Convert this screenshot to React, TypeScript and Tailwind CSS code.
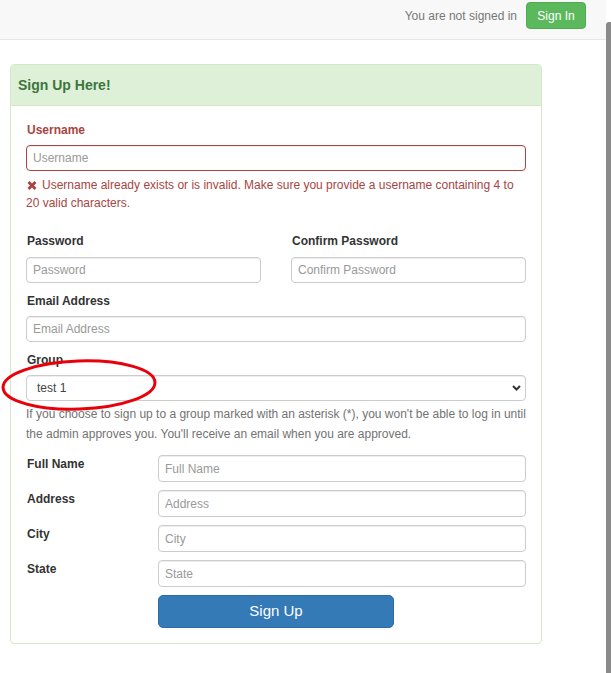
import React from "react";

const inputBase =
  "block w-full border rounded-[4px] px-[6px] text-[12px] text-[#555] bg-white outline-none placeholder:text-[#999] shadow-[inset_0_1px_1px_rgba(0,0,0,0.075)]";
const inputCls = inputBase + " border-[#ccc]";

function HRow({ label, placeholder }: { label: string; placeholder: string }) {
  return (
    <div className="flex items-start">
      <label className="w-[132px] shrink-0 pl-[1px] leading-[18px] font-bold text-[#333]">{label}</label>
      <input className={inputCls + " h-[27px]"} placeholder={placeholder} />
    </div>
  );
}

export default function App() {
  return (
    <div className="relative flex w-[611px] h-[673px] overflow-hidden bg-white font-['Liberation_Sans',Arial,sans-serif] text-[12px] text-[#333]">
      <div className="flex-1 flex flex-col">
        <nav className="h-[40px] shrink-0 bg-[#f8f8f8] border-b border-[#e7e7e7] flex items-start justify-end pr-[20px]">
          <span className="mt-[3px] leading-[27px] text-[#777]">You are not signed in</span>
          <button className="ml-[9px] mt-[2px] h-[27px] w-[60px] rounded-[4px] border border-[#4cae4c] bg-[#5cb85c] text-white text-[12px] leading-none">
            Sign In
          </button>
        </nav>

        <main className="pt-[24px] pl-[10px]">
          <div className="w-[532px] border border-[#d6e9c6] rounded-[4px] overflow-hidden">
            <div className="h-[40px] bg-[#dff0d8] border-b border-[#d6e9c6] flex items-center pl-[7px] box-content">
              <h3 className="text-[14px] font-bold text-[#3c763d]">Sign Up Here!</h3>
            </div>

            <div className="px-[15px] pt-[15px] pb-[15px] flex flex-col">
              {/* Username */}
              <label className="block leading-[18px] pl-[1px] font-bold text-[#a94442]">Username</label>
              <input className={inputBase + " mt-[6px] h-[26px] border-[#a94442]"} placeholder="Username" />
              <p className="mt-[5px] leading-[18px] text-[#a94442]">
                <svg width="10" height="9" viewBox="0 0 10 9" className="inline-block mr-[5px] ml-[1px]">
                  <path d="M1.5 1 L8.5 8 M8.5 1 L1.5 8" stroke="#a94442" strokeWidth="2.8" strokeLinecap="butt" />
                </svg>
                Username already exists or is invalid. Make sure you provide a username containing 4 to 20 valid
                characters.
              </p>

              {/* Passwords */}
              <div className="mt-[20px] grid grid-cols-2 gap-[30px]">
                <div>
                  <label className="block leading-[18px] pl-[1px] font-bold">Password</label>
                  <input type="password" className={inputCls + " mt-[7px] h-[26px]"} placeholder="Password" />
                </div>
                <div>
                  <label className="block leading-[18px] pl-[1px] font-bold">Confirm Password</label>
                  <input type="password" className={inputCls + " mt-[7px] h-[26px]"} placeholder="Confirm Password" />
                </div>
              </div>

              {/* Email */}
              <label className="mt-[9px] block leading-[18px] pl-[1px] font-bold">Email Address</label>
              <input className={inputCls + " mt-[6px] h-[26px]"} placeholder="Email Address" />

              {/* Group */}
              <label className="mt-[9px] block leading-[18px] pl-[1px] font-bold">Group</label>
              <div className="relative mt-[6px]">
                <select
                  className="block w-full h-[26px] appearance-none border border-[#ccc] rounded-[4px] pl-[10px] pr-[20px] text-[12px] text-[#444] bg-white outline-none shadow-[inset_0_1px_1px_rgba(0,0,0,0.075)]"
                  defaultValue="test 1"
                >
                  <option>test 1</option>
                </select>
                <svg
                  width="9"
                  height="6"
                  viewBox="0 0 9 6"
                  className="pointer-events-none absolute right-[5px] top-[10px]"
                >
                  <path d="M1 1 L4.5 4.5 L8 1" fill="none" stroke="#333" strokeWidth="2" />
                </svg>
              </div>
              <p className="mt-[3px] leading-[20px] text-[#737373]">
                If you choose to sign up to a group marked with an asterisk (*), you won't be able to log in until the
                admin approves you. You'll receive an email when you are approved.
              </p>

              {/* Horizontal rows */}
              <div className="mt-[11px] flex flex-col gap-[8px]">
                <HRow label="Full Name" placeholder="Full Name" />
                <HRow label="Address" placeholder="Address" />
                <HRow label="City" placeholder="City" />
                <HRow label="State" placeholder="State" />
                <div className="flex">
                  <button className="ml-[132px] w-[236px] h-[33px] rounded-[5px] border border-[#2e6da4] bg-[#337ab7] text-white text-[15px]">
                    Sign Up
                  </button>
                </div>
              </div>
            </div>
          </div>
        </main>
      </div>

      <div className="w-[5px] shrink-0 mt-[22px] bg-[#8a8a8a] rounded-tl-[3px]" />

      {/* annotation ellipse */}
      <svg
        width="162"
        height="62"
        viewBox="0 0 162 62"
        className="pointer-events-none absolute left-0 top-[355px]"
      >
        <ellipse
          cx="79"
          cy="30"
          rx="76"
          ry="24"
          transform="rotate(-2 79 30)"
          fill="none"
          stroke="#e8000b"
          strokeWidth="3"
        />
      </svg>
    </div>
  );
}
